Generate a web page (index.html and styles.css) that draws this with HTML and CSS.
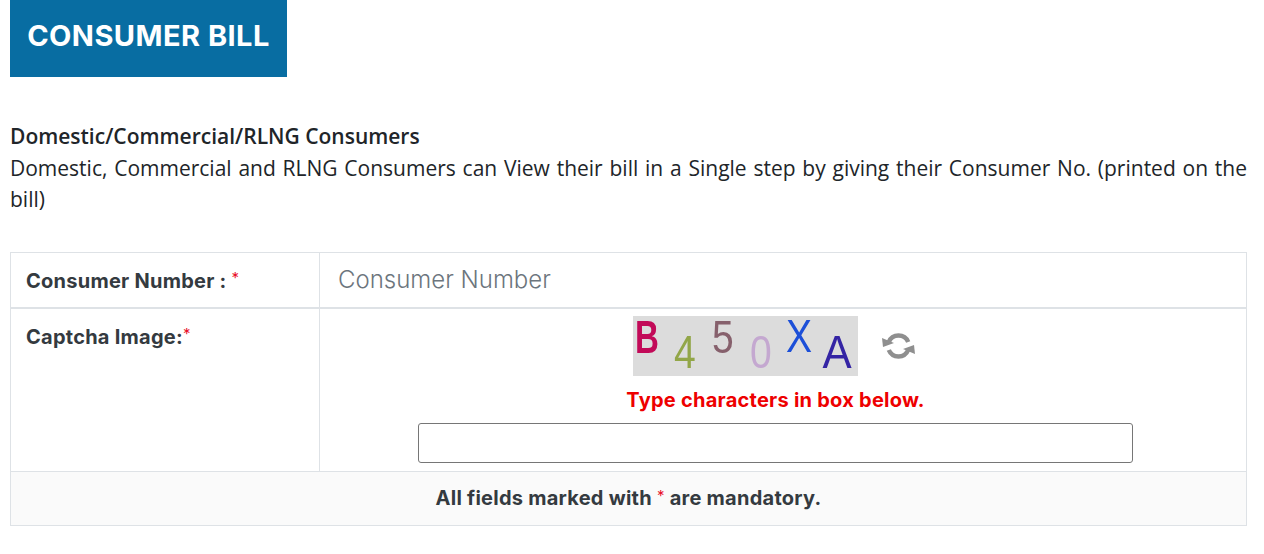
FILE: index.html
```html
<!DOCTYPE html>
<html lang="en">
<head>
    <meta charset="UTF-8">
    <meta name="viewport" content="width=device-width, initial-scale=1.0">
    <title>Consumer Bill</title>
    <link rel="stylesheet" href="styles.css">
</head>
<body>
    <h1 class="page-title">CONSUMER BILL</h1>

    <p class="intro">
        <span class="intro-head">Domestic/Commercial/RLNG Consumers</span><br>
        Domestic, Commercial and RLNG Consumers can View their bill in a Single step by giving their Consumer No. (printed on the bill)
    </p>

    <table class="bill-form">
        <tr class="row-number">
            <th class="label">Consumer Number : <span class="req">*</span></th>
            <td class="field"><input class="number-input" type="text" placeholder="Consumer Number"></td>
        </tr>
        <tr class="row-captcha">
            <th class="label">Captcha Image:<span class="req">*</span></th>
            <td class="captcha-cell">
                <div class="captcha-line">
                    <div class="captcha">
                        <span class="ch ch-b">B</span>
                        <span class="ch ch-4">4</span>
                        <span class="ch ch-5">5</span>
                        <span class="ch ch-0">0</span>
                        <span class="ch ch-x">X</span>
                        <span class="ch ch-a">A</span>
                    </div>
                    <svg class="refresh" viewBox="0 0 33 28" aria-hidden="true">
                        <path class="refresh-arc" d="M26.2 10A10.5 10.5 0 0 0 6.8 10"/>
                        <path class="refresh-arc" d="M6.8 18A10.5 10.5 0 0 0 26.2 18"/>
                        <polygon points="0,6 12,11 1,15"/>
                        <polygon points="33,22 21,17 32,13"/>
                    </svg>
                </div>
                <div class="captcha-hint">Type characters in box below.</div>
                <input class="captcha-input" type="text">
            </td>
        </tr>
        <tr class="row-note">
            <td class="note" colspan="2">All fields marked with <span class="req req-note">*</span> are mandatory.</td>
        </tr>
    </table>
</body>
</html>
```

FILE: styles.css
```css
body {
    margin: 0;
    padding: 0 17px 0 10px;
    background-color: #fff;
    color: #212529;
    font-family: "Open Sans", sans-serif;
}
.page-title {
    width: 277px;
    height: 77px;
    margin: 0;
    background-color: #086da2;
    color: #fff;
    font-family: Inter, sans-serif;
    font-size: 29px;
    font-weight: 700;
    letter-spacing: 0.45px;
    line-height: 72px;
    text-align: center;
    white-space: nowrap;
}
.intro {
    margin: 44px 0 36px;
    font-size: 21px;
    line-height: 31.5px;
    text-align: justify;
}
.intro-head {
    font-weight: 600;
}
.bill-form {
    width: 100%;
    border-collapse: collapse;
    font-family: Inter, sans-serif;
    font-size: 20px;
    letter-spacing: 0.25px;
}
.bill-form th,
.bill-form td {
    border: 1px solid #dee2e6;
}
.row-number {
    height: 54px;
}
.row-captcha {
    height: 162px;
}
.row-note {
    height: 54px;
}
.row-number th,
.row-number td {
    border-bottom-width: 2px;
}
.label {
    width: 278px;
    padding: 16px 15px 12px;
    box-sizing: content-box;
    color: #343a40;
    font-weight: 700;
    text-align: left;
    vertical-align: top;
}
.req {
    color: #e8102a;
    font-size: 15px;
    font-weight: 400;
    line-height: 0;
    vertical-align: 5px;
}
.req-note {
    vertical-align: 4px;
}
.field {
    padding: 0;
}
.number-input {
    display: block;
    width: 100%;
    height: 54px;
    box-sizing: border-box;
    padding: 0 18px;
    border: 0;
    outline: 0;
    font-family: Inter, sans-serif;
    font-size: 24px;
}
.number-input::placeholder {
    color: #6c757d;
    font-weight: 300;
    opacity: 1;
}
.captcha-cell {
    padding: 7px 15px 8px 0;
    text-align: center;
    vertical-align: top;
}
.captcha-line {
    display: flex;
    justify-content: center;
    align-items: center;
    gap: 24px;
    padding-right: 4px;
}
.captcha {
    display: flex;
    width: 225px;
    height: 60px;
    background-color: #dcdcdc;
    font-family: "Liberation Sans", sans-serif;
    font-size: 46px;
    letter-spacing: 0;
    line-height: 1;
}
.ch {
    flex: none;
    width: 38px;
    height: 46px;
    transform: scaleX(0.85);
}
.ch-b { margin-left: -5px; margin-top: -2px; color: #c20a58; font-weight: 700; transform: scaleX(0.72); }
.ch-4 { margin-top: 13px; color: #92a648; }
.ch-5 { margin-top: -2px; color: #86606c; }
.ch-0 { margin-top: 13px; color: #c4a8d0; }
.ch-x { margin-top: -3px; color: #1c4fd8; }
.ch-a { margin-top: 13px; color: #3424a4; transform: scaleX(0.95); }
.refresh {
    width: 33px;
    height: 28px;
    fill: #8f8f8f;
    filter: blur(0.5px);
}
.refresh-arc {
    fill: none;
    stroke: #8f8f8f;
    stroke-width: 4.5;
}
.captcha-hint {
    margin-top: 11px;
    color: #e00;
    font-weight: 700;
    line-height: 26px;
}
.captcha-input {
    display: block;
    width: 715px;
    height: 40px;
    box-sizing: border-box;
    margin: 10px auto 0;
    border: 1px solid #767676;
    border-radius: 3px;
}
.note {
    background-color: #fafafa;
    color: #343a40;
    font-weight: 700;
    text-align: center;
}
```
